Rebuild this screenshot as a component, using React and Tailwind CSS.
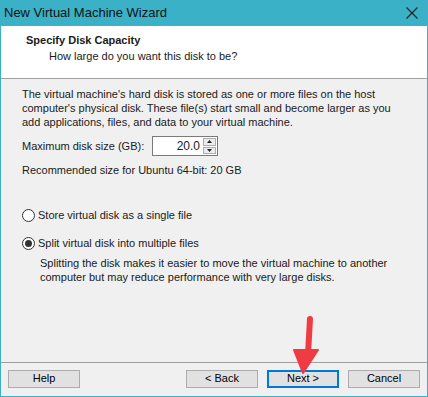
import React from 'react';

const font = { fontFamily: 'Tahoma, "Liberation Sans", Arial, sans-serif' };

function Radio({ checked }) {
  return (
    <span className="w-[13px] h-[13px] rounded-full border border-[#333] bg-white flex items-center justify-center shrink-0">
      {checked && <span className="w-[7px] h-[7px] rounded-full bg-[#333]" />}
    </span>
  );
}

function Button({ children, primary }) {
  return (
    <div
      className={
        'w-[72px] h-[18px] flex items-center justify-center bg-[#e1e1e1] text-[11px] text-black ' +
        (primary ? 'border-2 border-[#0078d7]' : 'border border-[#adadad]')
      }
    >
      {children}
    </div>
  );
}

function Arrow() {
  return (
    <svg className="absolute left-[288px] top-[314px]" width="34" height="64" viewBox="0 0 34 64">
      <path d="M21 5 L19 40" stroke="#ef3b44" strokeWidth="6" strokeLinecap="round" fill="none" />
      <path d="M5 36 L29 36 L14 59 Z" fill="#ef3b44" stroke="#ef3b44" strokeWidth="2" strokeLinejoin="round" />
    </svg>
  );
}

export default function App() {
  return (
    <div
      className="relative w-[428px] h-[397px] flex flex-col bg-[#f0f0f0] border-x border-b border-[#3ab1c6] text-[11px] text-[#1a1a1a] overflow-hidden"
      style={font}
    >
      <div className="h-[26px] shrink-0 bg-[#3ab1c6] flex items-center justify-between pl-[4px] pr-[10px] -mx-px">
        <span className="text-[13px] text-[#111]" style={{ fontFamily: '"Liberation Sans", Arial, sans-serif' }}>
          New Virtual Machine Wizard
        </span>
        <svg width="12" height="12" viewBox="0 0 12 12">
          <path d="M0.5 0.5 L11.5 11.5 M11.5 0.5 L0.5 11.5" stroke="#222" strokeWidth="1.2" />
        </svg>
      </div>

      <div className="h-[53px] shrink-0 bg-white border-b border-[#a0a0a0] pl-[25px] pt-[7px]">
        <div className="font-bold text-[11px] leading-[14px]">Specify Disk Capacity</div>
        <div className="pl-[23px] leading-[14px] mt-[2px]">How large do you want this disk to be?</div>
      </div>

      <div className="flex-1 flex flex-col pl-[21px] pt-[8px]">
        <p className="leading-[14px] w-[380px]">
          The virtual machine's hard disk is stored as one or more files on the host computer's physical disk. These
          file(s) start small and become larger as you add applications, files, and data to your virtual machine.
        </p>

        <div className="flex items-center mt-[7px] h-[20px]">
          <span className="w-[130px]">Maximum disk size (GB):</span>
          <div className="w-[66px] h-[20px] bg-white border border-[#7a7a7a] flex items-center">
            <span className="flex-1 text-right pr-[3px] text-[12px]">20.0</span>
            <div className="w-[13px] h-[16px] flex flex-col gap-px mr-px">
              <div className="flex-1 border border-[#adadad] bg-[#ececec] flex items-center justify-center">
                <svg width="5" height="3" viewBox="0 0 5 3"><path d="M0 3 L2.5 0 L5 3 Z" fill="#222" /></svg>
              </div>
              <div className="flex-1 border border-[#adadad] bg-[#ececec] flex items-center justify-center">
                <svg width="5" height="3" viewBox="0 0 5 3"><path d="M0 0 L2.5 3 L5 0 Z" fill="#222" /></svg>
              </div>
            </div>
          </div>
        </div>

        <div className="mt-[7px] leading-[14px]">Recommended size for Ubuntu 64-bit: 20 GB</div>

        <div className="flex items-center gap-[3px] mt-[31px] leading-[14px]">
          <Radio />
          <span>Store virtual disk as a single file</span>
        </div>
        <div className="flex items-center gap-[3px] mt-[14px] leading-[14px]">
          <Radio checked />
          <span>Split virtual disk into multiple files</span>
        </div>
        <p className="pl-[18px] mt-[6px] leading-[14px] w-[380px]">
          Splitting the disk makes it easier to move the virtual machine to another computer but may reduce
          performance with very large disks.
        </p>
      </div>

      <div className="h-[34px] shrink-0 border-t border-[#a0a0a0] flex items-center px-[7px] pb-[2px]">
        <Button>Help</Button>
        <div className="flex-1" />
        <div className="flex gap-[9px]">
          <Button>&lt; Back</Button>
          <Button primary>Next &gt;</Button>
          <Button>Cancel</Button>
        </div>
      </div>

      <Arrow />
    </div>
  );
}
